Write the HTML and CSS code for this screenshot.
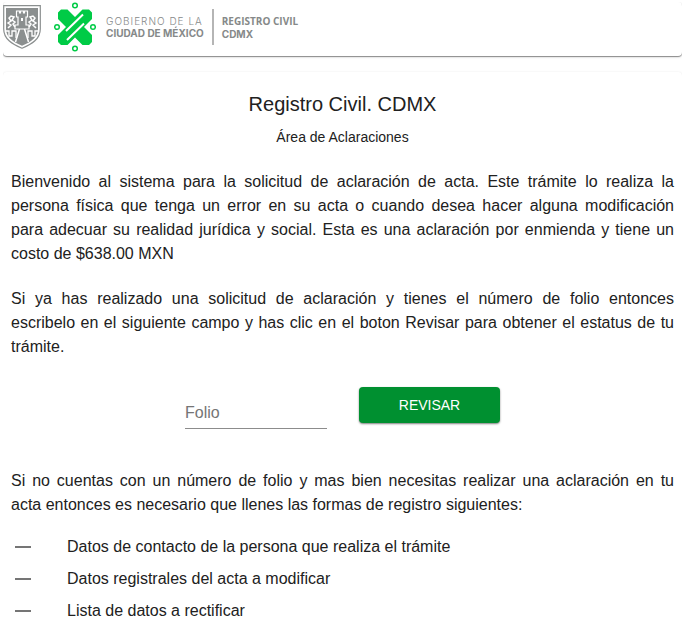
FILE: index.html
```html
<!DOCTYPE html>
<html lang="es">
<head>
<meta charset="utf-8">
<meta name="viewport" content="width=device-width, initial-scale=1">
<title>Registro Civil. CDMX</title>
<link rel="stylesheet" href="styles.css">
</head>
<body>
<header class="card brand">
  <svg class="shield" viewBox="0 0 38 44" aria-hidden="true">
    <path d="M.7.7H37.300V24C37.300 34 29 39 19 43.300 9 39 .7 34 .7 24Z" fill="#fff" stroke="#8b8f8f" stroke-width="1.200"/>
    <path d="M3 3H35V24C35 32 28 37 19 40.800 10 37 3 32 3 24Z" fill="#8b8f8f"/>
    <path d="M13.500 6h3v2h1V6h3v2h1V6h3v6H23v8h3v4H12v-4h3v-8h-1.500Z" fill="#8b8f8f" stroke="#fff" stroke-width="1.200"/>
    <path d="M18 13h2v3h-2Z" fill="#fff"/>
    <path d="M5 23l3-3-3-2 3-2-2-3 2-2 3 1-2 3 3 2-2 2 2 3M33 23l-3-3 3-2-3-2 2-3-2-2-3 1 2 3-3 2 2 2-2 3" fill="none" stroke="#fff" stroke-width="1.500"/>
    <path d="M3 26h3v5h3v-5h4v7M35 26h-3v5h-3v-5h-4v7" fill="none" stroke="#fff" stroke-width="1.300"/>
    <path d="M16.500 24l-4 13M21.500 24l4 13" fill="none" stroke="#fff" stroke-width="1.500"/>
  </svg>
  <svg class="emblem" viewBox="0 0 42 50" aria-hidden="true">
    <path d="M4 10.500L7 7.500H13.500L21 15 28.500 7.500H35L38 10.500V17L30 25 38 33V40L35 43H28.500L21 35.500 13.500 43H7L4 40V33L12 25 4 17Z" fill="#00cb46"/>
    <path d="M12 29L29 12.500M13 38L30 21.500" fill="none" stroke="#fff" stroke-width="2"/>
    <g fill="#fff" stroke="#00cb46" stroke-width="1.500">
      <circle cx="21" cy="3.500" r="2.300"/><circle cx="3" cy="25" r="2.300"/><circle cx="39" cy="25" r="2.300"/><circle cx="21" cy="46.500" r="2.300"/>
    </g>
  </svg>
  <p class="city"><span class="city-top">GOBIERNO DE LA</span><span class="city-name">CIUDAD DE MÉXICO</span></p>
  <p class="office"><span class="office-name">REGISTRO CIVIL</span><span class="office-city">CDMX</span></p>
</header>
<main class="card content">
  <h1>Registro Civil. CDMX</h1>
  <p class="subtitle">Área de Aclaraciones</p>
  <p class="text">Bienvenido al sistema para la solicitud de aclaración de acta. Este trámite lo realiza la persona física que tenga un error en su acta o cuando desea hacer alguna modificación para&nbsp;adecuar su realidad jurídica y social. Esta es una aclaración por enmienda y tiene un costo&nbsp;de $638.00 MXN</p>
  <p class="text">Si ya has realizado una solicitud de aclaración y tienes el número de folio entonces escribelo&nbsp;en el siguiente campo y has clic en el boton Revisar para obtener el estatus de tu trámite.</p>
  <form class="lookup">
    <div class="field">
      <label for="folio">Folio</label>
      <input id="folio" type="text">
    </div>
    <button type="button">REVISAR</button>
  </form>
  <p class="text">Si no cuentas con un número de folio y mas bien necesitas realizar una aclaración en tu acta&nbsp;entonces es necesario que llenes las formas de registro siguientes:</p>
  <ul class="steps">
    <li>Datos de contacto de la persona que realiza el trámite</li>
    <li>Datos registrales del acta a modificar</li>
    <li>Lista de datos a rectificar</li>
  </ul>
</main>
</body>
</html>
```

FILE: styles.css
```css
* { box-sizing: border-box; }

body {
  margin: 2px 3px 0;
  background: #fff;
  color: #212121;
  font: 16px/24px "Liberation Sans", Arial, sans-serif;
}

p, h1, ul { margin: 0; }

.card {
  background: #fff;
  border-radius: 4px;
  box-shadow: 0 1px 3px rgba(0, 0, 0, 0.18);
}

.brand {
  display: flex;
  align-items: center;
  min-height: 54px;
  margin-bottom: 16px;
  padding-bottom: 4px;
  box-shadow: 0 1px 1px rgba(0, 0, 0, 0.4), 0 1px 3px rgba(0, 0, 0, 0.14);
}

.shield { width: 38px; height: 44px; }
.emblem { width: 42px; height: 50px; margin-left: 13px; }

.city, .office {
  display: flex;
  flex-direction: column;
  justify-content: center;
  height: 36px;
  color: #868989;
  font-size: 10px;
  line-height: 12px;
  white-space: nowrap;
}

.city {
  margin-left: 10px;
  padding-right: 8px;
  border-right: 2px solid #b5b5b5;
  font-family: Inter, sans-serif;
}

.city-top { font-weight: 300; letter-spacing: 1px; }
.city-name { font-weight: 700; }

.office {
  margin-left: 8px;
  font-family: "Open Sans", sans-serif;
  font-weight: 700;
}

.office-name { line-height: 13px; }
.office-city { font-family: Inter, sans-serif; }

.content {
  padding: 16px 8px;
}

h1 {
  font-size: 20px;
  font-weight: 400;
  line-height: 32px;
  text-align: center;
}

.subtitle {
  margin: 6px 0 22px;
  font-size: 14px;
  line-height: 22px;
  text-align: center;
}

.text {
  margin-bottom: 21px;
  text-align: justify;
}

.lookup {
  display: flex;
  justify-content: center;
  align-items: flex-start;
  gap: 32px;
  margin: 28px 0 40px;
}

.field { position: relative; width: 142px; }

.field label {
  position: absolute;
  top: 14px;
  left: 0;
  color: #757575;
}

.field input {
  display: block;
  width: 100%;
  height: 42px;
  padding: 12px 0 4px;
  border: 0;
  border-bottom: 1px solid #8c8c8c;
  background: transparent;
  font: inherit;
}

.lookup button {
  width: 141px;
  height: 36px;
  padding: 0;
  border: 0;
  border-radius: 4px;
  background: #009030;
  color: #fff;
  font: 14px/24px "Liberation Sans", Arial, sans-serif;
  box-shadow: 0 1px 2px rgba(0, 0, 0, 0.5);
}

.steps {
  margin-top: -7px;
  padding: 0;
  list-style: none;
}

.steps li {
  display: flex;
  align-items: center;
  gap: 36px;
  min-height: 32px;
  padding-left: 4px;
}

.steps li::before {
  width: 16px;
  height: 2px;
  background: #757575;
  content: "";
}
```
